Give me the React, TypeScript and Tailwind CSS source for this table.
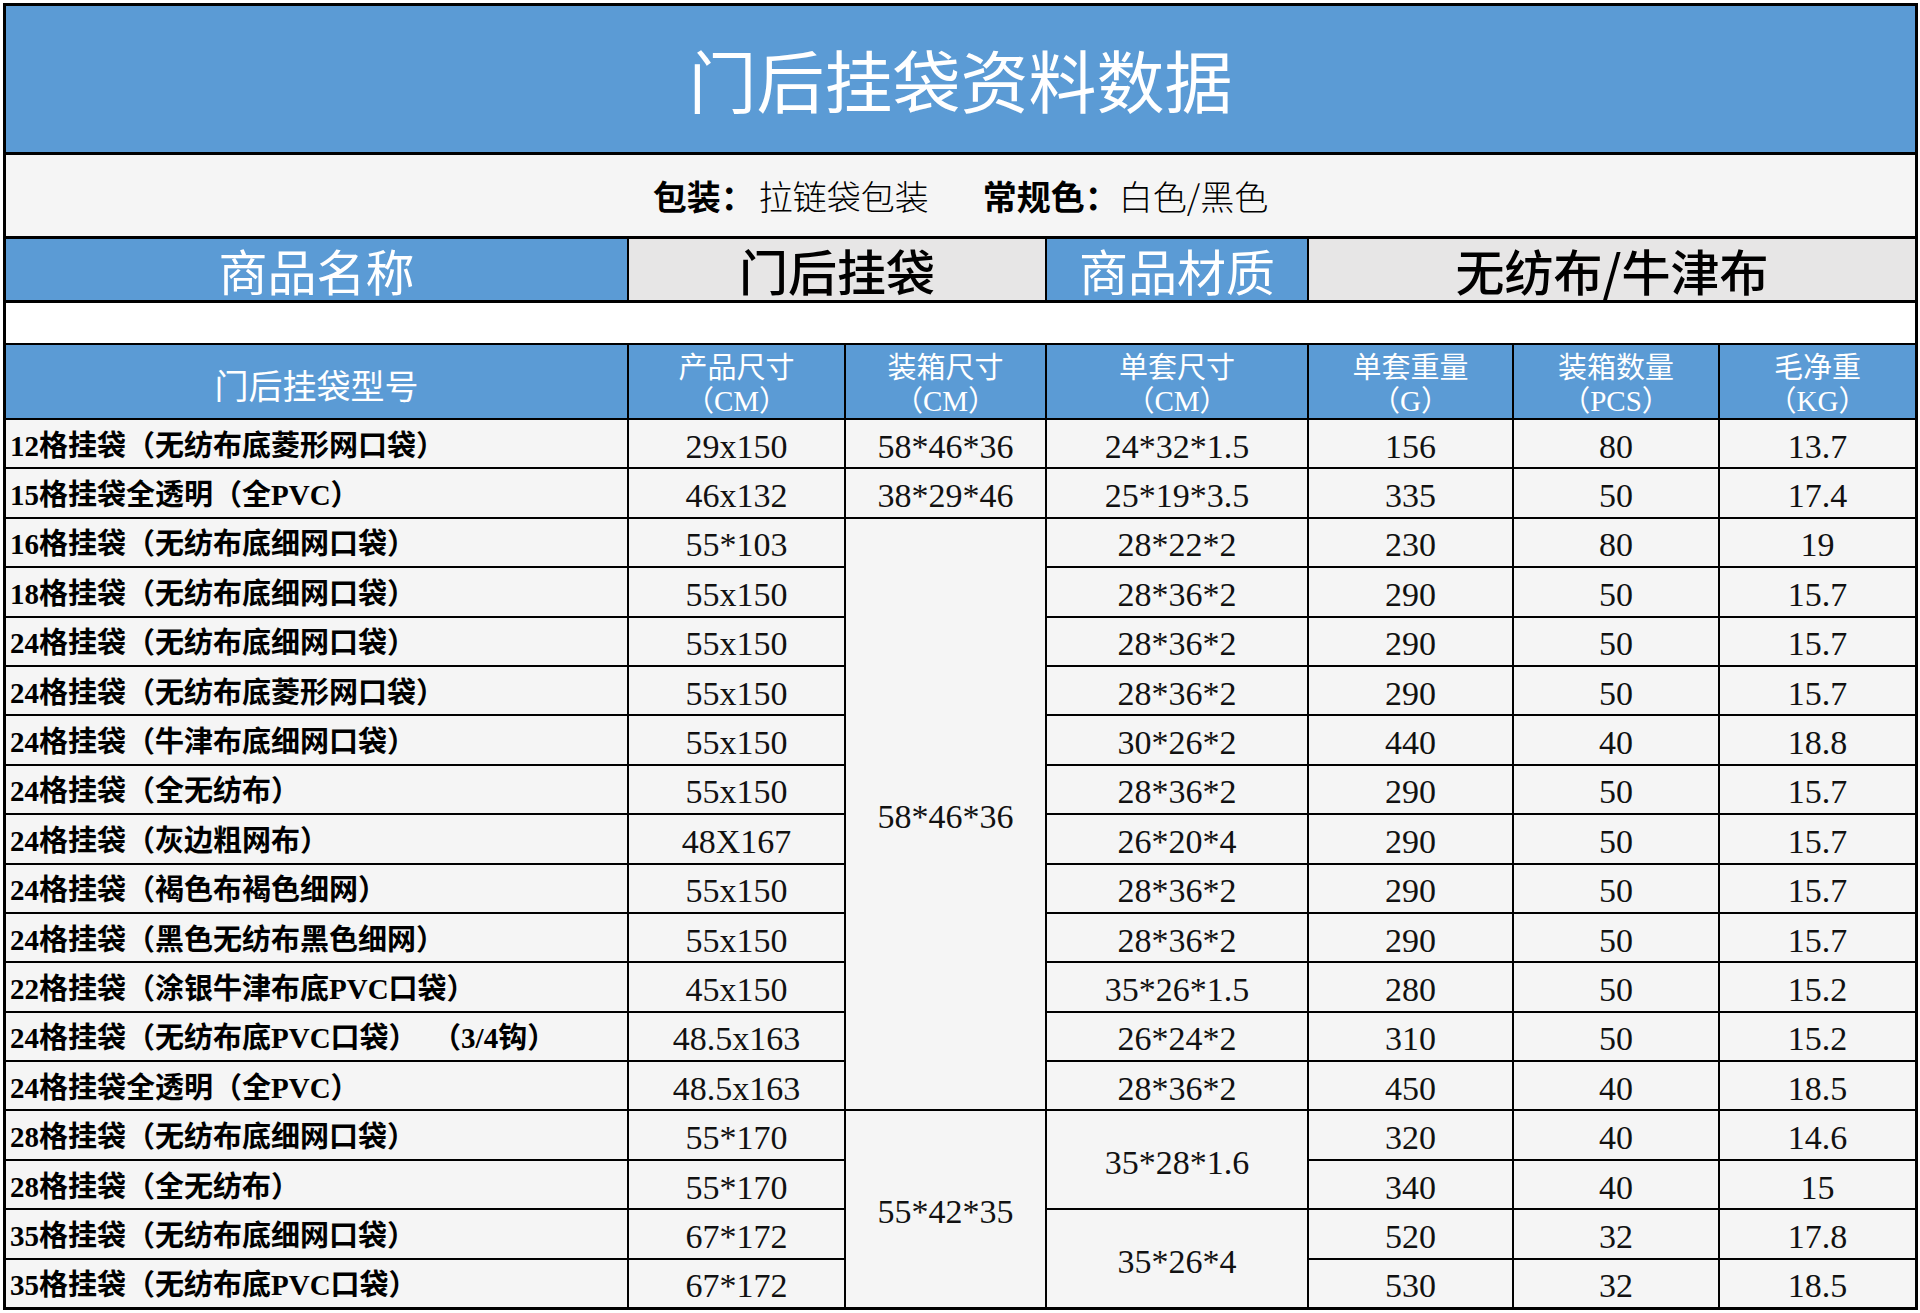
import React from "react";

type Row = {
  name: string;
  size: string;
  box?: string;
  boxSpan?: number;
  single?: string;
  singleSpan?: number;
  weight: string;
  qty: string;
  gross: string;
};

const rows: Row[] = [
  { name: "12格挂袋（无纺布底菱形网口袋）", size: "29x150", box: "58*46*36", single: "24*32*1.5", weight: "156", qty: "80", gross: "13.7" },
  { name: "15格挂袋全透明（全PVC）", size: "46x132", box: "38*29*46", single: "25*19*3.5", weight: "335", qty: "50", gross: "17.4" },
  { name: "16格挂袋（无纺布底细网口袋）", size: "55*103", box: "58*46*36", boxSpan: 12, single: "28*22*2", weight: "230", qty: "80", gross: "19" },
  { name: "18格挂袋（无纺布底细网口袋）", size: "55x150", single: "28*36*2", weight: "290", qty: "50", gross: "15.7" },
  { name: "24格挂袋（无纺布底细网口袋）", size: "55x150", single: "28*36*2", weight: "290", qty: "50", gross: "15.7" },
  { name: "24格挂袋（无纺布底菱形网口袋）", size: "55x150", single: "28*36*2", weight: "290", qty: "50", gross: "15.7" },
  { name: "24格挂袋（牛津布底细网口袋）", size: "55x150", single: "30*26*2", weight: "440", qty: "40", gross: "18.8" },
  { name: "24格挂袋（全无纺布）", size: "55x150", single: "28*36*2", weight: "290", qty: "50", gross: "15.7" },
  { name: "24格挂袋（灰边粗网布）", size: "48X167", single: "26*20*4", weight: "290", qty: "50", gross: "15.7" },
  { name: "24格挂袋（褐色布褐色细网）", size: "55x150", single: "28*36*2", weight: "290", qty: "50", gross: "15.7" },
  { name: "24格挂袋（黑色无纺布黑色细网）", size: "55x150", single: "28*36*2", weight: "290", qty: "50", gross: "15.7" },
  { name: "22格挂袋（涂银牛津布底PVC口袋）", size: "45x150", single: "35*26*1.5", weight: "280", qty: "50", gross: "15.2" },
  { name: "24格挂袋（无纺布底PVC口袋）\u00a0\u00a0（3/4钩）", size: "48.5x163", single: "26*24*2", weight: "310", qty: "50", gross: "15.2" },
  { name: "24格挂袋全透明（全PVC）", size: "48.5x163", single: "28*36*2", weight: "450", qty: "40", gross: "18.5" },
  { name: "28格挂袋（无纺布底细网口袋）", size: "55*170", box: "55*42*35", boxSpan: 4, single: "35*28*1.6", singleSpan: 2, weight: "320", qty: "40", gross: "14.6" },
  { name: "28格挂袋（全无纺布）", size: "55*170", weight: "340", qty: "40", gross: "15" },
  { name: "35格挂袋（无纺布底细网口袋）", size: "67*172", single: "35*26*4", singleSpan: 2, weight: "520", qty: "32", gross: "17.8" },
  { name: "35格挂袋（无纺布底PVC口袋）", size: "67*172", weight: "530", qty: "32", gross: "18.5" },
];

const heads = [
  ["产品尺寸", "（CM）"],
  ["装箱尺寸", "（CM）"],
  ["单套尺寸", "（CM）"],
  ["单套重量", "（G）"],
  ["装箱数量", "（PCS）"],
  ["毛净重", "（KG）"],
];

const spanClass = (n?: number) =>
  n === 12 ? "row-span-12" : n === 4 ? "row-span-4" : n === 2 ? "row-span-2" : "";

const Num = ({ children, span }: { children: React.ReactNode; span?: number }) => (
  <div className={`bg-[#f5f5f5] flex items-center justify-center pt-[6px] text-[34px] leading-none text-[#111] ${spanClass(span)}`}>
    {children}
  </div>
);

export default function App() {
  return (
    <div className="w-[1920px] h-[1313px] bg-white pt-[3px] pl-[3px] font-['Liberation_Serif','Noto_Sans_CJK_SC',serif]">
      <div className="w-[1915px] border-[3px] border-black bg-black">
        {/* title */}
        <div className="h-[149px] bg-[#5b9bd5] border-b-[3px] border-black flex items-center justify-center">
          <span className="font-['Noto_Sans_CJK_SC',sans-serif] text-[68px] text-white leading-none">门后挂袋资料数据</span>
        </div>

        {/* info */}
        <div className="h-[84px] bg-[#f5f5f5] border-b-[3px] border-black flex items-center justify-center text-[34px] leading-none text-black font-['Noto_Sans_CJK_SC',sans-serif]">
          <span className="font-bold">包装：</span>
          <span className="ml-[4px] font-light">拉链袋包装</span>
          <span className="ml-[54px] font-bold">常规色：</span>
          <span className="font-light">白色/黑色</span>
        </div>

        {/* name row */}
        <div className="grid grid-cols-[621px_416px_260px_606px] gap-x-[2px] h-[64px] border-b-[3px] border-black font-['Noto_Sans_CJK_SC',sans-serif] text-[49px] leading-none">
          <div className="bg-[#5b9bd5] text-white flex items-center justify-center">商品名称</div>
          <div className="bg-[#e7e6e6] text-black flex items-center justify-center font-medium">门后挂袋</div>
          <div className="bg-[#5b9bd5] text-white flex items-center justify-center">商品材质</div>
          <div className="bg-[#e7e6e6] text-black flex items-center justify-center font-medium">无纺布/牛津布</div>
        </div>

        {/* blank */}
        <div className="h-[42px] bg-white border-b-[2px] border-black" />

        {/* table */}
        <div className="grid grid-cols-[621px_215px_199px_260px_203px_204px_195px] grid-rows-[73px_repeat(18,47.4px)] gap-[2px]">
          <div className="bg-[#5b9bd5] text-white flex items-center justify-center text-[34px] pt-[6px] font-['Noto_Sans_CJK_SC',sans-serif]">
            门后挂袋型号
          </div>
          {heads.map(([a, b]) => (
            <div key={a} className="bg-[#5b9bd5] text-white flex flex-col items-center justify-center pt-[3px] text-[29px] leading-[36px]">
              <span className="font-['Noto_Sans_CJK_SC',sans-serif]">{a}</span>
              <span>{b}</span>
            </div>
          ))}

          {rows.map((r) => (
            <React.Fragment key={r.name + r.weight}>
              <div className="bg-[#f5f5f5] flex items-center pl-[4px] pt-[5px] text-[29px] font-bold text-black leading-none whitespace-nowrap">
                {r.name}
              </div>
              <Num>{r.size}</Num>
              {r.box && <Num span={r.boxSpan}>{r.box}</Num>}
              {r.single && <Num span={r.singleSpan}>{r.single}</Num>}
              <Num>{r.weight}</Num>
              <Num>{r.qty}</Num>
              <Num>{r.gross}</Num>
            </React.Fragment>
          ))}
        </div>
      </div>
    </div>
  );
}
